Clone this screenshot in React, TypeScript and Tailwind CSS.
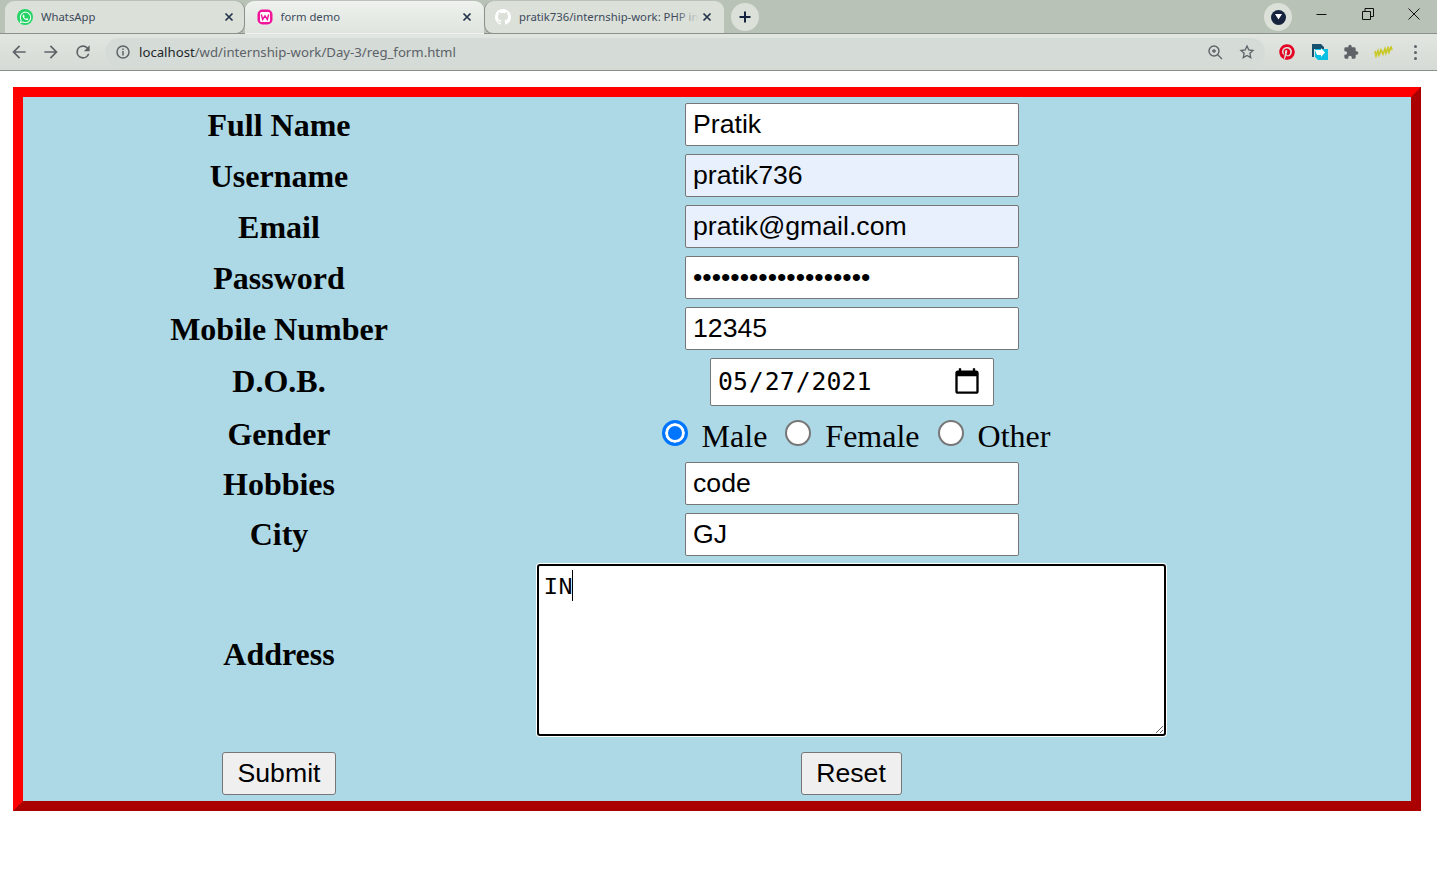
import { FaPinterest, FaWhatsapp } from "react-icons/fa"

const sans = "font-['Noto_Sans',sans-serif]"

const Tab = ({ icon, title, active, fade, curve }: { icon: React.ReactNode; title: string; active?: boolean; fade?: boolean; curve?: string }) => (
  <div className={`relative flex h-[33px] w-[239.5px] shrink-0 items-center rounded-t-[9px] border-b ${active ? "border-transparent bg-gradient-to-b from-[#eff2ee] to-[#dfe4de]" : "border-[#8a918a] bg-[#dbe0d9]"} ${curve ?? "pl-[12px] pr-[9px]"}`}>
    <div className="flex h-4 w-4 shrink-0 items-center justify-center">{icon}</div>
    <span className="ml-[8px] flex-1 overflow-hidden whitespace-nowrap py-[2px] text-[11.3px] text-[#3c4a5c]">{title}</span>
    {fade && <div className="absolute right-[25px] top-0 h-[32px] w-[24px] bg-gradient-to-r from-transparent to-[#dbe0d9]" />}
    <svg width="16" height="16" viewBox="0 0 16 16" className="shrink-0"><path d="M4.5 4.5l7 7M11.5 4.5l-7 7" stroke="#25324a" strokeWidth="1.7" /></svg>
  </div>
)

const Label = ({ children, nudge = "pt-[1px]" }: { children: string; nudge?: string }) => (
  <div className={`text-[32px] leading-[37px] font-bold text-black ${nudge}`}>{children}</div>
)

const Field = ({ value, type = "text", filled }: { value: string; type?: string; filled?: boolean }) => (
  <input type={type} defaultValue={value} className={`h-[43px] w-[334px] rounded-[2px] border border-[#767676] px-[7px] pb-[1px] font-['Liberation_Sans',sans-serif] text-[26.67px] text-black outline-none ${filled ? "bg-[#e8f0fe]" : "bg-white"}`} />
)

const Radio = ({ label, checked }: { label: string; checked?: boolean }) => (
  <>
    <input type="radio" name="gender" defaultChecked={checked} className="m-0 mt-[-6px] h-[26px] w-[26px] appearance-none rounded-full border-2 border-[#767676] bg-white checked:border-[3px] checked:border-[#0075ff] checked:bg-[#0075ff] checked:shadow-[inset_0_0_0_3px_#fff]" />
    <span className="ml-[14px] mr-[18px] text-[32px] leading-[37px] text-black">{label}</span>
  </>
)

const App = () => {
  return (
    <div className="min-h-[896px] bg-white font-['Liberation_Serif',serif]">
      {/* browser chrome */}
      <div className={`${sans} bg-[#b8c2b6]`}>
        <div className="flex h-[34px] items-start border-b border-[#8a918a] pl-[5px] pt-[1px]">
          <Tab title="WhatsApp" curve="rounded-br-[9px] border-r pl-[12px] pr-[7px]" icon={
            <div className="flex h-4 w-4 items-center justify-center rounded-full bg-[#25d366]"><FaWhatsapp className="h-[13px] w-[13px] text-white" /></div>
          } />
          <Tab active title="form demo" icon={
            <svg viewBox="0 0 16 16" width="16" height="16"><rect x=".5" y=".5" width="15" height="15" rx="5" fill="#f0169a" /><rect x="3" y="3" width="10" height="10" rx="1.500" fill="#fff" /><path d="M4.300 5.500l1.400 5 2.300-3.600 2.300 3.600 1.400-5" fill="none" stroke="#f0169a" strokeWidth="1.400" /></svg>
          } />
          <Tab fade title="pratik736/internship-work: PHP in" curve="rounded-bl-[9px] border-l pl-[10px] pr-[9px]" icon={
            <svg viewBox="0 0 16 16" width="16" height="16"><path fill="#fff" d="M8 0C3.580 0 0 3.580 0 8c0 3.540 2.290 6.530 5.470 7.590.4.070.55-.17.55-.38v-1.340c-2.230.48-2.700-1.070-2.700-1.070-.36-.92-.89-1.170-.89-1.170-.73-.5.050-.49.050-.49.8.060 1.230.82 1.230.82.720 1.220 1.870.87 2.330.66.070-.52.280-.87.510-1.070-1.780-.2-3.640-.89-3.640-3.950 0-.87.310-1.590.820-2.150-.08-.2-.36-1.020.08-2.120 0 0 .67-.21 2.200.82a7.700 7.700 0 0 1 4 0c1.530-1.040 2.200-.82 2.200-.82.44 1.100.16 1.920.08 2.120.51.56.82 1.270.82 2.150 0 3.070-1.870 3.750-3.650 3.950.29.250.54.730.54 1.480v2.200c0 .21.150.46.550.38A8 8 0 0 0 16 8c0-4.420-3.580-8-8-8z" /></svg>
          } />
          <div className="ml-[7px] mt-[2px] flex h-[28px] w-[28px] items-center justify-center rounded-full bg-[#dbe0d9]">
            <svg width="14" height="14" viewBox="0 0 14 14"><path d="M7 1.500v11M1.500 7h11" stroke="#16233f" strokeWidth="2" /></svg>
          </div>
          <div className="ml-auto flex items-start">
            <div className="mr-[7px] mt-[2px] flex h-[28px] w-[28px] items-center justify-center rounded-full bg-[#dbe0d9]">
              <div className="flex h-[15px] w-[15px] items-center justify-center rounded-full bg-[#16233f]">
                <svg width="7" height="6" viewBox="0 0 7 6"><path d="M0 0h7L3.500 5.500z" fill="#fff" /></svg>
              </div>
            </div>
            <div className="flex h-[26px] w-[46px] items-center justify-center">
              <svg width="12" height="12" viewBox="0 0 12 12"><path d="M.5 6.500h10" stroke="#111" /></svg>
            </div>
            <div className="flex h-[26px] w-[46px] items-center justify-center">
              <svg width="12" height="12" viewBox="0 0 12 12"><path d="M.5 3.500h8v8h-8zM3 3.500v-3h8.500v8h-3" fill="none" stroke="#111" /></svg>
            </div>
            <div className="flex h-[26px] w-[46px] items-center justify-center">
              <svg width="12" height="12" viewBox="0 0 12 12"><path d="M.5.500l11 11M11.500.500l-11 11" stroke="#111" /></svg>
            </div>
          </div>
        </div>
        <div className="flex h-[37px] items-center border-b border-[#8a918a] bg-gradient-to-b from-[#e2e6e0] to-[#d5dad4] pl-[9px] pr-[13px]">
          <svg width="20" height="20" viewBox="0 0 24 24" className="mr-[12px]"><path d="M20 11H7.800l5.600-5.600L12 4l-8 8 8 8 1.400-1.400L7.800 13H20z" fill="#5f6368" /></svg>
          <svg width="20" height="20" viewBox="0 0 24 24" className="mr-[12px]"><path d="M4 11h12.200l-5.600-5.600L12 4l8 8-8 8-1.400-1.400 5.600-5.600H4z" fill="#5f6368" /></svg>
          <svg width="20" height="20" viewBox="0 0 24 24"><path d="M17.650 6.350A7.960 7.960 0 0 0 12 4a8 8 0 1 0 7.730 10h-2.080A6 6 0 1 1 12 6c1.660 0 3.140.690 4.220 1.780L13 11h7V4z" fill="#5f6368" /></svg>
          <div className="ml-[12px] flex h-[28px] w-[1160px] shrink-0 items-center rounded-full bg-[#d5dbd6] pl-[10px] pr-[10px]">
            <svg width="16" height="16" viewBox="0 0 16 16"><circle cx="8" cy="8" r="6" fill="none" stroke="#5f6368" strokeWidth="1.500" /><path d="M8 7v4.500M8 4.500v1.500" stroke="#5f6368" strokeWidth="1.500" /></svg>
            <span className="ml-[8px] pt-[2px] text-[13.2px] text-[#5b6168]"><span className="text-[#22262a]">localhost</span>/wd/internship-work/Day-3/reg_form.html</span>
            <svg width="16" height="16" viewBox="0 0 16 16" className="ml-auto mr-[16px]"><circle cx="7" cy="7" r="5" fill="none" stroke="#5f6368" strokeWidth="1.400" /><path d="M10.700 10.700L15 15M5 7h4M7 5v4" stroke="#5f6368" strokeWidth="1.300" /></svg>
            <svg width="16" height="16" viewBox="0 0 24 24"><path d="M12 3l2.700 6 6.300.7-4.700 4.300 1.300 6.400L12 17.200l-5.600 3.200 1.300-6.400L3 9.700 9.300 9z" fill="none" stroke="#5f6368" strokeWidth="2" /></svg>
          </div>
          <FaPinterest className="ml-[14px] h-4 w-4 shrink-0 text-[#e60023]" />
          <svg width="16" height="16" viewBox="0 0 16 16" className="ml-[17px] shrink-0"><path d="M0 0h9l3 3v2H2v8H0z" fill="#17506e" /><path d="M3 5h13v11H6l-3-3z" fill="#09c0e4" /><path d="M3 6h6V4l4 4.500L9 13v-2H5" fill="#fff" /></svg>
          <svg width="16" height="16" viewBox="0 0 24 24" className="ml-[15px] shrink-0"><path fill="#5f6368" d="M20.500 11H19V7a2 2 0 0 0-2-2h-4V3.500a2.500 2.500 0 0 0-5 0V5H4a2 2 0 0 0-2 2v3.800h1.500a2.700 2.700 0 0 1 0 5.400H2V20a2 2 0 0 0 2 2h3.800v-1.500a2.700 2.700 0 0 1 5.400 0V22H17a2 2 0 0 0 2-2v-4h1.500a2.500 2.500 0 0 0 0-5z" /></svg>
          <svg width="22" height="12" viewBox="0 0 22 12" className="ml-[15px] shrink-0"><path d="M1 5l1 5 2-5 1 4 2-5 2 4 2-5 1 4 2-5 1 4 2-5 1 3" fill="none" stroke="#c9c92a" strokeWidth="1.800" /></svg>
          <div className="ml-[18px] flex shrink-0 flex-col gap-[3px]">
            <div className="h-[3px] w-[3px] rounded-full bg-[#5f6368]" />
            <div className="h-[3px] w-[3px] rounded-full bg-[#5f6368]" />
            <div className="h-[3px] w-[3px] rounded-full bg-[#5f6368]" />
          </div>
        </div>
      </div>

      {/* form */}
      <div className="pl-[13px] pt-[16px]">
        <div className="w-[1408px] border-[10px] border-t-[#ff0000] border-l-[#ff0000] border-r-[#aa0000] border-b-[#aa0000] bg-[#add8e6] py-[6px]">
          <div className="grid grid-cols-[512px_634px] items-center justify-items-center gap-y-2">
            <Label>Full Name</Label>
            <Field value="Pratik" />
            <Label>Username</Label>
            <Field value="pratik736" filled />
            <Label>Email</Label>
            <Field value="pratik@gmail.com" filled />
            <Label>Password</Label>
            <Field value="Pratik123456789Abcd" type="password" />
            <Label>Mobile Number</Label>
            <Field value="12345" />
            <Label nudge="pb-[2px]">D.O.B.</Label>
            <input type="date" defaultValue="2021-05-27" className="h-[48px] w-[284px] rounded-[2px] border border-[#767676] bg-white pl-[6px] pr-[11px] font-['DejaVu_Sans_Mono',monospace] text-[24.8px] text-black outline-none [&::-webkit-calendar-picker-indicator]:m-0 [&::-webkit-calendar-picker-indicator]:h-[30px] [&::-webkit-calendar-picker-indicator]:w-[30px] [&::-webkit-calendar-picker-indicator]:p-0" />
            <Label nudge="">Gender</Label>
            <div className="flex h-[40px] items-center pl-[26px] pt-[4px]">
              <Radio label="Male" checked />
              <Radio label="Female" />
              <Radio label="Other" />
            </div>
            <Label>Hobbies</Label>
            <Field value="code" />
            <Label nudge="">City</Label>
            <Field value="GJ" />
            <Label nudge="">Address</Label>
            <div className="relative mb-2 mr-[2px] flex">
              <textarea defaultValue="IN" className="h-[172px] w-[629px] rounded-[3px] border-2 border-black bg-white px-[5px] pb-[5px] pt-[7px] font-['Liberation_Mono',monospace] text-[24.4px] leading-[30px] text-black shadow-[0_0_0_1px_#fff] outline-none" />
              <div className="absolute left-[35px] top-[6px] h-[31px] w-px bg-black" />
            </div>
            <button className="h-[43px] w-[114px] rounded-[3px] border border-[#767676] bg-[#efefef] pb-[2px] font-['Liberation_Sans',sans-serif] text-[26.67px] text-black">Submit</button>
            <button className="mr-[2px] h-[43px] w-[101px] rounded-[3px] border border-[#767676] bg-[#efefef] pb-[2px] font-['Liberation_Sans',sans-serif] text-[26.67px] text-black">Reset</button>
          </div>
        </div>
      </div>
    </div>
  )
}
export default App
